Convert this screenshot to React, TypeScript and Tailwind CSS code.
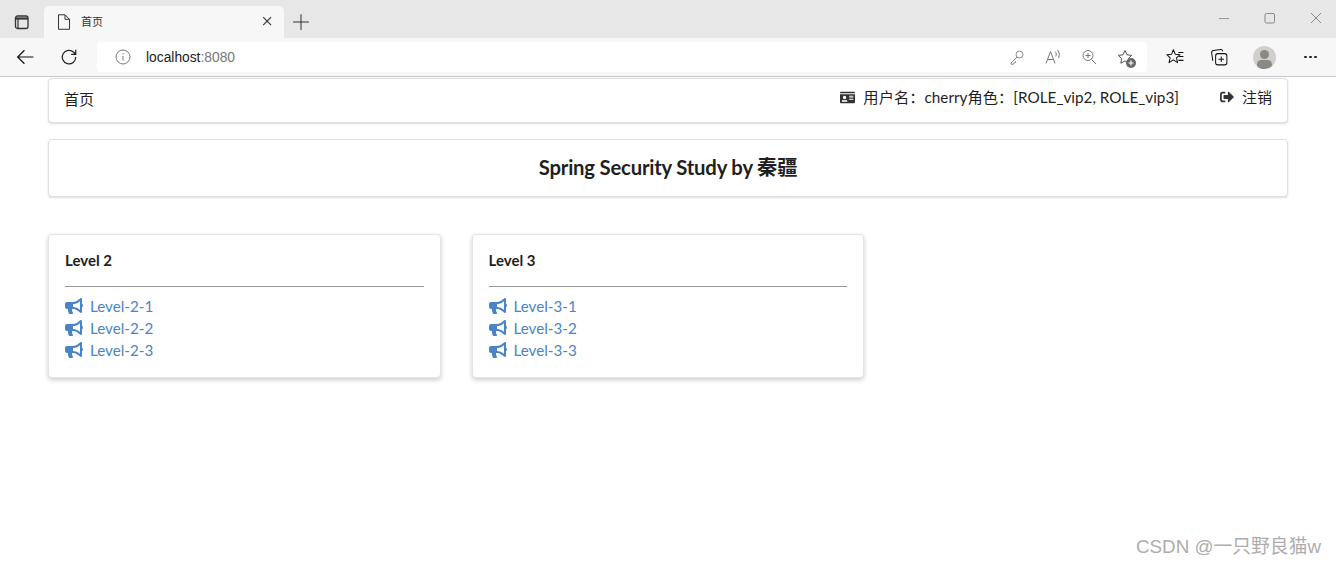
import type { FC, ReactNode } from "react";
import { FaBullhorn, FaIdCard, FaSignOutAlt } from "react-icons/fa";

const uiFont = "font-['Liberation_Sans','Noto_Sans_CJK_SC',sans-serif]";
const pageFont = "font-['Lato','Noto_Sans_CJK_SC',sans-serif]";

const levels = [
	{ title: "Level 2", links: ["Level-2-1", "Level-2-2", "Level-2-3"] },
	{ title: "Level 3", links: ["Level-3-1", "Level-3-2", "Level-3-3"] },
];

const Icon: FC<{ size?: number; color?: string; children: ReactNode }> = ({
	size = 16,
	color = "#333",
	children,
}) => (
	<svg width={size} height={size} viewBox="0 0 16 16" fill="none" stroke={color} strokeWidth="1" className="block shrink-0">
		{children}
	</svg>
);

const TabStrip = () => (
	<div className="flex h-[38px] bg-[#e7e7e7]">
		<div className="flex w-[44px] items-center justify-center pt-[6px]">
			<Icon>
				<rect x="1.5" y="2" width="12.5" height="12.5" rx="2" strokeWidth="1.3" />
				<path d="M1.5 4.5h12.5" strokeWidth="2.2" />
				<path d="M4 4v10" strokeWidth="1.2" />
			</Icon>
		</div>
		<div className="mt-[6px] flex h-[32px] w-[240px] items-center rounded-t-[5px] bg-[#f7f7f7] pl-[12px] pr-[9px]">
			<Icon>
				<path d="M2.5 0.8h6.5l4.500 4.500v10h-11z" strokeLinejoin="round" />
				<path d="M9 0.8v4.500h4.500" />
			</Icon>
			<span className={`ml-[9px] flex-1 text-[11px] text-[#333] ${uiFont}`}>首页</span>
			<Icon size={14}>
				<path d="M2.5 2.5l9 9M11.5 2.5l-9 9" strokeWidth="1.3" />
			</Icon>
		</div>
		<div className="flex w-[34px] items-center justify-center pt-[6px]">
			<Icon size={18}>
				<path d="M8 1v14M1 8h14" strokeWidth="0.9" />
			</Icon>
		</div>
		<div className="flex-1" />
		<div className="flex items-start gap-[30px] pt-[10px] pr-[12px]">
			<Icon color="#999">
				<path d="M3 8.5h10" />
			</Icon>
			<Icon color="#888">
				<rect x="3" y="3.5" width="9.5" height="9.5" rx="1.5" />
			</Icon>
			<Icon color="#888">
				<path d="M3 3l10 10M13 3L3 13" />
			</Icon>
		</div>
	</div>
);

const Toolbar = () => (
	<div className="flex h-[39px] items-start border-b border-[#c8c8c8] bg-[#f7f7f7] pt-[4px]">
		<div className="flex h-[30px] w-[97px] items-center pl-[16px]">
			<Icon size={18} color="#111">
				<path d="M15.5 8H1.500M7.500 2L1.500 8l6 6" strokeWidth="1.100" />
			</Icon>
			<div className="ml-[26px]">
				<Icon size={18} color="#222">
					<path d="M14 8a6 6 0 1 1-1.800-4.200L14 5.600M14 1.500v4.100h-4.100" strokeWidth="1.100" />
				</Icon>
			</div>
		</div>
		<div className="flex h-[30px] w-[1050px] items-center rounded-[4px] bg-white pl-[18px] pr-[14px]">
			<Icon color="#777">
				<circle cx="8" cy="8" r="7" />
				<path d="M8 7v4.500M8 4.300v1.200" />
			</Icon>
			<span className={`ml-[15px] flex-1 pt-[2px] text-[13.8px] text-[#222] ${uiFont}`}>
				localhost<span className="text-[#777]">:8080</span>
			</span>
			<div className="flex items-center gap-[20px]">
				<Icon color="#888">
					<circle cx="10.5" cy="5.5" r="3.5" />
					<path d="M8 8l-6 6v1.200h2.500l.5-1.500h1.500v-1.500" />
				</Icon>
				<Icon color="#777">
					<path d="M1 14.500L5.500 2.500l4.500 12M2.800 10.500h5.500M10 2.500c1.500 1.200 1.500 3.500.8 5M12.500 1c2.200 2.200 2.200 5.500 1 8" />
				</Icon>
				<Icon color="#777">
					<circle cx="7" cy="6.5" r="5" />
					<path d="M10.500 10.500l4.500 4.500M4.500 6.500h5M7 4v5" />
				</Icon>
				<div className="relative">
					<Icon color="#555">
						<path d="M8 1.500l2 4.300 4.700.6-3.400 3.200.9 4.600L8 12l-4.200 2.200.9-4.600-3.400-3.200 4.700-.6z" strokeLinejoin="round" />
					</Icon>
					<div className="absolute bottom-[-3px] right-[-3px] flex h-[10px] w-[10px] items-center justify-center rounded-full bg-[#666]">
						<svg width="6" height="6" viewBox="0 0 6 6" stroke="#fff" strokeWidth="1.2">
							<path d="M3 0.500v5M0.500 3h5" />
						</svg>
					</div>
				</div>
			</div>
		</div>
		<div className="flex h-[30px] flex-1 items-center pl-[19px]">
			<Icon size={18} color="#111">
				<path d="M6.500 1.500l1.800 4 4.200.4-3.200 2.800 1 4.300L6.500 10.500 2.700 13l1-4.300L.8 5.900l4.200-.4zM11 4h4.500M11.500 7.500h4M11 11h4.500" strokeWidth="0.9" strokeLinejoin="round" />
			</Icon>
			<div className="ml-[26px]">
				<Icon size={18} color="#111">
					<path d="M2.500 11.500l-1-7Q1.300 2.500 3 2.300l6.500-.9Q11 1.300 11.400 3" strokeWidth="0.9" />
					<rect x="5" y="5" width="10" height="10" rx="2" strokeWidth="0.9" />
					<path d="M10 7.500v5M7.500 10h5" strokeWidth="0.9" />
				</Icon>
			</div>
			<div className="ml-[25px] h-[23px] w-[23px] overflow-hidden rounded-full bg-[#d0cfcc]">
				<div className="mx-auto mt-[4px] h-[9px] w-[9px] rounded-full bg-[#8b8986]" />
				<div className="mx-auto mt-[1px] h-[9px] w-[15px] rounded-full bg-[#8b8986]" />
			</div>
			<div className="ml-[28px] flex gap-[2.5px]">
				<div className="h-[2.5px] w-[2.5px] rounded-full bg-[#222]" />
				<div className="h-[2.5px] w-[2.5px] rounded-full bg-[#222]" />
				<div className="h-[2.5px] w-[2.5px] rounded-full bg-[#222]" />
			</div>
		</div>
	</div>
);

const Segment: FC<{ className: string; children: ReactNode }> = ({ className, children }) => (
	<div className={`rounded-[4px] border border-[#dfe0e1] bg-white shadow-[0_1px_2px_0_rgba(34,36,38,0.15)] ${className}`}>
		{children}
	</div>
);

const LevelCard: FC<{ title: string; links: string[] }> = ({ title, links }) => (
	<div className="h-[144px] w-[392.5px] rounded-[4px] border border-[#e4e4e4] bg-white px-[16px] pt-[15px] shadow-[0_2px_5px_rgba(0,0,0,0.2)]">
		<h3 className="text-[15px] font-bold leading-[20px] text-[#1f1f1f]">{title}</h3>
		<div className="mt-[16px] mb-[8px] h-px bg-[#999]" />
		{links.map((link) => (
			<a key={link} href="#" className="flex h-[22px] items-center text-[15.2px] text-[#4a84c6]">
				<FaBullhorn size={18} className="mr-[7px] shrink-0" />
				{link}
			</a>
		))}
	</div>
);

const App = () => (
	<div className={`relative h-[565px] w-[1336px] overflow-hidden bg-white ${pageFont}`}>
		<TabStrip />
		<Toolbar />
		<div className="px-[48px]">
			<Segment className="mt-px flex h-[45px] items-center px-[15px] text-[15.3px] text-[#1f1f1f]">
				<span className="flex-1 pb-[3px] text-[15px]">首页</span>
				<div className="flex items-center pb-[7px]">
					<FaIdCard size={15} className="mr-[8px] text-[#333]" />
					<span>用户名：cherry角色：[ROLE_vip2, ROLE_vip3]</span>
				</div>
				<div className="ml-[41px] flex items-center pb-[7px] text-[15px]">
					<FaSignOutAlt size={14} className="mr-[8px] text-[#333]" />
					<span>注销</span>
				</div>
			</Segment>
			<Segment className="mt-[16px] flex h-[58px] items-center justify-center pb-[2px]">
				<h2 className="text-[20.3px] font-bold tracking-[-0.2px] text-[#1f1f1f]">Spring Security Study by 秦疆</h2>
			</Segment>
			<div className="mt-[37px] flex gap-[31px]">
				{levels.map((level) => (
					<LevelCard key={level.title} title={level.title} links={level.links} />
				))}
			</div>
		</div>
		<div className={`absolute bottom-[4px] right-[15px] text-[18.8px] text-[#adadad] ${uiFont}`}>CSDN @一只野良猫w</div>
	</div>
);

export default App;
